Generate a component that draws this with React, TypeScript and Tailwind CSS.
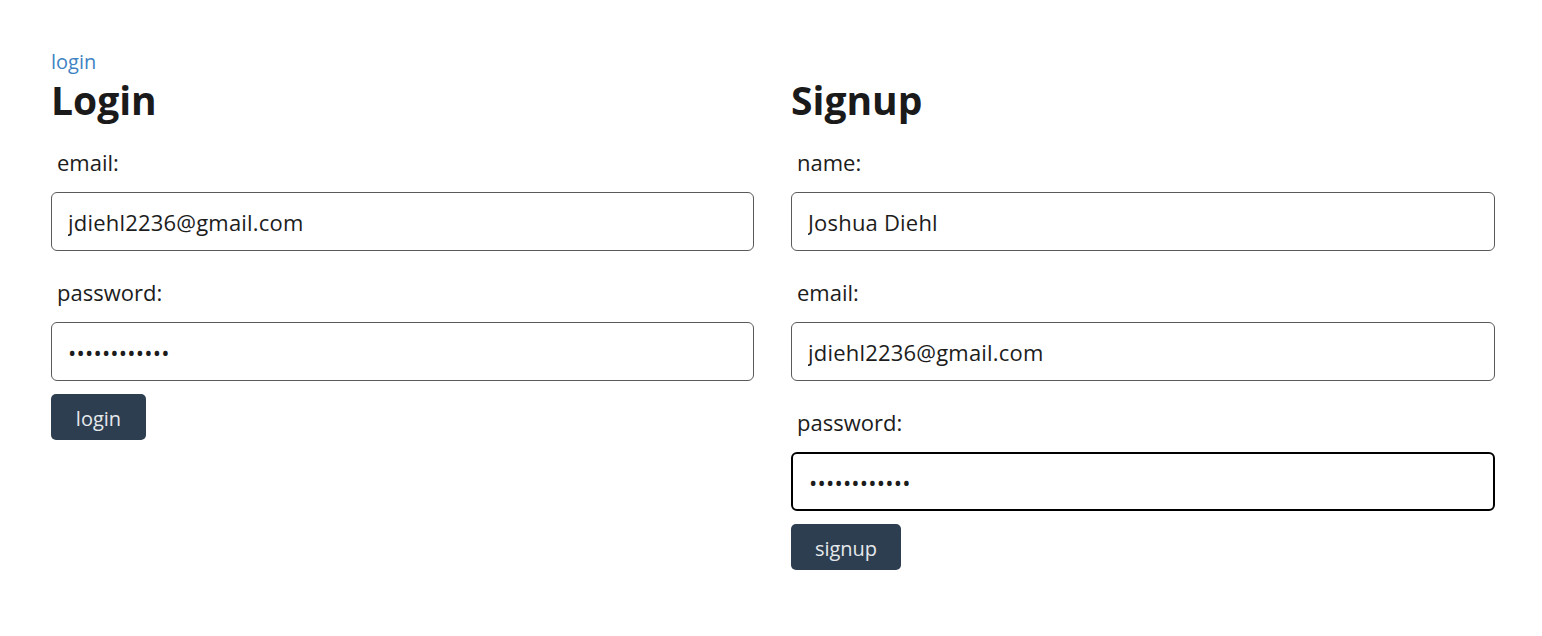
import { useState } from "react";

const font = { fontFamily: '"Open Sans", "Noto Sans", sans-serif' };

const Field = ({ label, type = "text", value, focused = false }: {
    label: string,
    type?: string,
    value: string,
    focused?: boolean
}) => {
    const [val, setVal] = useState(value);
    return (
        <div>
            <label className="block h-[30px] mt-[26px] mb-[15px] pl-[6px] text-[22px] leading-[30px] text-[#1c1c1c]">{label}</label>
            <input
                type={type}
                value={val}
                autoFocus={focused}
                onChange={(e) => setVal(e.target.value)}
                className={
                    focused
                        ? "block w-full h-[59px] rounded-[6px] border-2 border-black px-[16px] text-[22px] tracking-[0.2px] text-[#1c1c1c] outline-none"
                        : "block w-full h-[59px] rounded-[6px] border border-[#5a5a5a] px-[16px] text-[22px] tracking-[0.2px] text-[#1c1c1c] outline-none"
                }
            />
        </div>
    );
};

export default function App() {
    return (
        <div className="min-h-screen bg-white pt-[48px] pl-[51px]" style={font}>
            <a href="#" className="block h-[30px] text-[20px] leading-[28px] text-[#3f83c3]">login</a>
            <div className="grid grid-cols-[703px_704px] gap-x-[37px]">
                <div>
                    <h1 className="h-[43px] text-[39px] leading-[43px] font-bold text-[#1a1a1a]">Login</h1>
                    <Field label="email:" value="jdiehl2236@gmail.com" />
                    <Field label="password:" type="password" value="abcdefghijkl" />
                    <button className="mt-[13px] w-[95px] h-[46px] pt-[3px] rounded-[5px] bg-[#2d3e50] text-[20px] text-[#e6e9ec]">login</button>
                </div>
                <div>
                    <h1 className="h-[43px] text-[39px] leading-[43px] font-bold text-[#1a1a1a]">Signup</h1>
                    <Field label="name:" value="Joshua Diehl" />
                    <Field label="email:" value="jdiehl2236@gmail.com" />
                    <Field label="password:" type="password" value="abcdefghijkl" focused />
                    <button className="mt-[13px] w-[110px] h-[46px] pt-[3px] rounded-[5px] bg-[#2d3e50] text-[20px] text-[#e6e9ec]">signup</button>
                </div>
            </div>
        </div>
    );
}
